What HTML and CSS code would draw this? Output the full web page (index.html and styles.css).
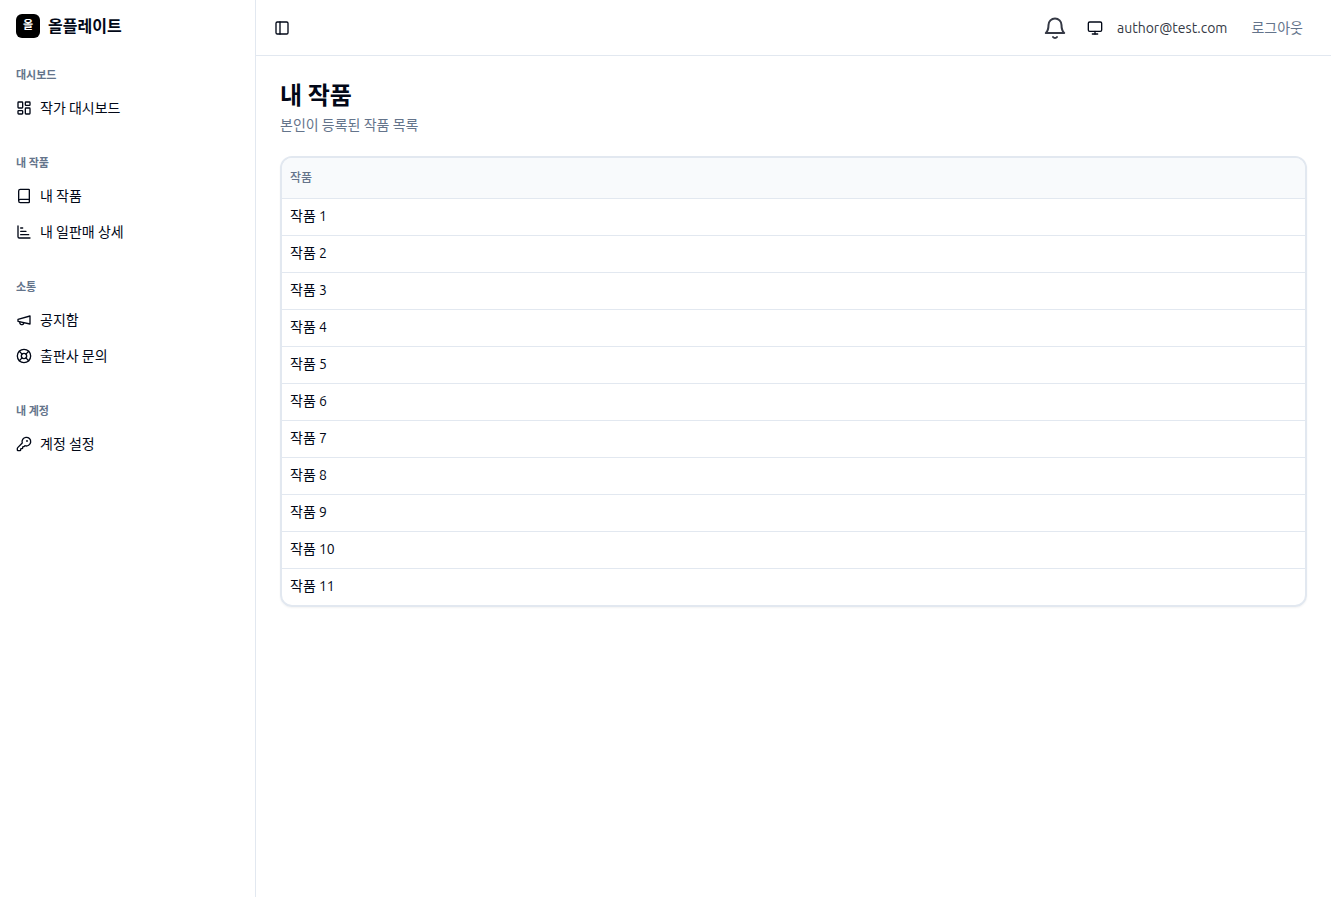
FILE: index.html
```html
<!DOCTYPE html>
<html lang="ko">
<head>
  <meta charset="utf-8">
  <meta name="viewport" content="width=device-width, initial-scale=1">
  <title>내 작품 - 올플레이트</title>
  <link rel="stylesheet" href="styles.css">
</head>
<body>
  <div class="layout">
    <aside class="sidebar">
      <a href="#" class="brand">
        <span class="brand-mark">올</span>
        <span class="brand-name">올플레이트</span>
      </a>
      <nav>
        <section class="nav-group">
          <h2 class="nav-label">대시보드</h2>
          <a href="#" class="nav-item">
            <svg class="icon" viewBox="0 0 24 24"><rect width="7" height="9" x="3" y="3" rx="1"/><rect width="7" height="5" x="14" y="3" rx="1"/><rect width="7" height="9" x="14" y="12" rx="1"/><rect width="7" height="5" x="3" y="16" rx="1"/></svg>
            <span>작가 대시보드</span>
          </a>
        </section>
        <section class="nav-group">
          <h2 class="nav-label">내 작품</h2>
          <a href="#" class="nav-item">
            <svg class="icon" viewBox="0 0 24 24"><path d="M4 19.500v-15A2.500 2.500 0 0 1 6.500 2H19a1 1 0 0 1 1 1v18a1 1 0 0 1-1 1H6.500a1 1 0 0 1 0-5H20"/></svg>
            <span>내 작품</span>
          </a>
          <a href="#" class="nav-item">
            <svg class="icon" viewBox="0 0 24 24"><path d="M3 3v16a2 2 0 0 0 2 2h16"/><path d="M7 11h8"/><path d="M7 16h12"/><path d="M7 6h3"/></svg>
            <span>내 일판매 상세</span>
          </a>
        </section>
        <section class="nav-group">
          <h2 class="nav-label">소통</h2>
          <a href="#" class="nav-item">
            <svg class="icon" viewBox="0 0 24 24"><path d="m3 11 18-5v12L3 14v-3z"/><path d="M11.600 16.800a3 3 0 1 1-5.800-1.600"/></svg>
            <span>공지함</span>
          </a>
          <a href="#" class="nav-item">
            <svg class="icon" viewBox="0 0 24 24"><circle cx="12" cy="12" r="10"/><path d="m4.930 4.930 4.240 4.240"/><path d="m14.830 9.170 4.240-4.240"/><path d="m14.830 14.830 4.240 4.240"/><path d="m9.170 14.830-4.240 4.240"/><circle cx="12" cy="12" r="4"/></svg>
            <span>출판사 문의</span>
          </a>
        </section>
        <section class="nav-group">
          <h2 class="nav-label">내 계정</h2>
          <a href="#" class="nav-item">
            <svg class="icon" viewBox="0 0 24 24"><path d="M2.586 17.414A2 2 0 0 0 2 18.828V21a1 1 0 0 0 1 1h3a1 1 0 0 0 1-1v-1a1 1 0 0 1 1-1h1a1 1 0 0 0 1-1v-1a1 1 0 0 1 1-1h.172a2 2 0 0 0 1.414-.586l.814-.814a6.500 6.500 0 1 0-4-4z"/><circle cx="16.500" cy="7.500" r=".5" fill="currentColor"/></svg>
            <span>계정 설정</span>
          </a>
        </section>
      </nav>
    </aside>

    <div class="main">
      <header class="topbar">
        <button type="button" class="icon-button" aria-label="사이드바 열기/닫기">
          <svg class="icon" viewBox="0 0 24 24"><rect width="18" height="18" x="3" y="3" rx="2"/><path d="M9 3v18"/></svg>
        </button>
        <div class="topbar-actions">
          <button type="button" class="icon-button bell" aria-label="알림">
            <svg class="icon" viewBox="0 0 24 24"><path d="M2.800 17H21.200C19.500 15.500 18.500 13.500 18.500 9A6.500 6.500 0 0 0 5.500 9C5.500 13.500 4.500 15.500 2.800 17z"/><path d="M10 21a2.500 2.500 0 0 0 4 0"/></svg>
          </button>
          <button type="button" class="icon-button" aria-label="테마">
            <svg class="icon" viewBox="0 0 24 24"><rect width="20" height="14" x="2" y="3" rx="2"/><path d="M8 21h8"/><path d="M12 17v4"/></svg>
          </button>
          <span class="user-email">author@test.com</span>
          <button type="button" class="logout">로그아웃</button>
        </div>
      </header>

      <main class="content">
        <h1>내 작품</h1>
        <p class="subtitle">본인이 등록된 작품 목록</p>
        <div class="table-card">
          <table>
            <thead>
              <tr><th scope="col">작품</th></tr>
            </thead>
            <tbody>
              <tr><td>작품 1</td></tr>
              <tr><td>작품 2</td></tr>
              <tr><td>작품 3</td></tr>
              <tr><td>작품 4</td></tr>
              <tr><td>작품 5</td></tr>
              <tr><td>작품 6</td></tr>
              <tr><td>작품 7</td></tr>
              <tr><td>작품 8</td></tr>
              <tr><td>작품 9</td></tr>
              <tr><td>작품 10</td></tr>
              <tr><td>작품 11</td></tr>
            </tbody>
          </table>
        </div>
      </main>
    </div>
  </div>
</body>
</html>
```
FILE: styles.css
```css
* {
  box-sizing: border-box;
}

body {
  margin: 0;
  background: #fff;
  color: #020817;
  font-family: Ubuntu, "Noto Sans CJK KR", sans-serif;
  font-size: 14px;
  line-height: 20px;
}

h1, h2, p {
  margin: 0;
}

a {
  color: inherit;
  text-decoration: none;
}

button {
  padding: 0;
  border: 0;
  background: none;
  color: inherit;
  font: inherit;
  cursor: pointer;
}

.icon {
  display: block;
  flex-shrink: 0;
  width: 16px;
  height: 16px;
  fill: none;
  stroke: currentColor;
  stroke-width: 2;
  stroke-linecap: round;
  stroke-linejoin: round;
}

.layout {
  display: flex;
  min-height: 100vh;
}

/* sidebar */
.sidebar {
  flex: 0 0 256px;
  border-right: 1px solid #e2e8f0;
}

.brand {
  display: flex;
  align-items: center;
  gap: 8px;
  padding: 14px 16px 20px;
}

.brand-mark {
  width: 24px;
  height: 24px;
  border-radius: 6px;
  background: #000;
  color: #fff;
  font-size: 11px;
  font-weight: 700;
  line-height: 22px;
  text-align: center;
}

.brand-name {
  font-size: 16px;
  font-weight: 700;
  line-height: 24px;
}

.nav-group {
  margin-bottom: 20px;
}

.nav-label {
  padding: 2px 16px 0;
  color: #64748b;
  font-size: 11px;
  font-weight: 700;
  line-height: 30px;
}

.nav-item {
  display: flex;
  align-items: center;
  gap: 8px;
  height: 36px;
  padding: 0 16px;
}

/* top bar */
.main {
  flex: 1;
  min-width: 0;
}

.topbar {
  display: flex;
  align-items: center;
  justify-content: space-between;
  height: 56px;
  padding: 0 28px 0 12px;
  border-bottom: 1px solid #e2e8f0;
}

.topbar-actions {
  display: flex;
  align-items: center;
}

.icon-button {
  display: grid;
  place-items: center;
  width: 28px;
  height: 28px;
}

.bell {
  margin-right: 12px;
  color: #353945;
}

.bell .icon {
  width: 24px;
  height: 24px;
}

.user-email {
  margin: 0 24px 0 8px;
  color: #353945;
}

.logout {
  color: #64748b;
}

/* page */
.content {
  padding: 24px;
}

h1 {
  font-size: 24px;
  font-weight: 700;
  line-height: 32px;
}

.subtitle {
  margin: 3px 0 21px;
  color: #64748b;
}

.table-card {
  overflow: hidden;
  border: 2px solid #e2e8f0;
  border-radius: 12px;
  box-shadow: 0 1px 2px rgba(0, 0, 0, 0.05);
}

table {
  width: 100%;
  border-collapse: collapse;
}

th {
  height: 40px;
  padding: 0 8px;
  border-bottom: 1px solid #e2e8f0;
  background: #f8fafc;
  color: #64748b;
  font-size: 12px;
  font-weight: 500;
  text-align: left;
}

td {
  padding: 7px 8px 9px;
  border-bottom: 1px solid #e2e8f0;
}

tr:last-child td {
  border-bottom: 0;
}
```
